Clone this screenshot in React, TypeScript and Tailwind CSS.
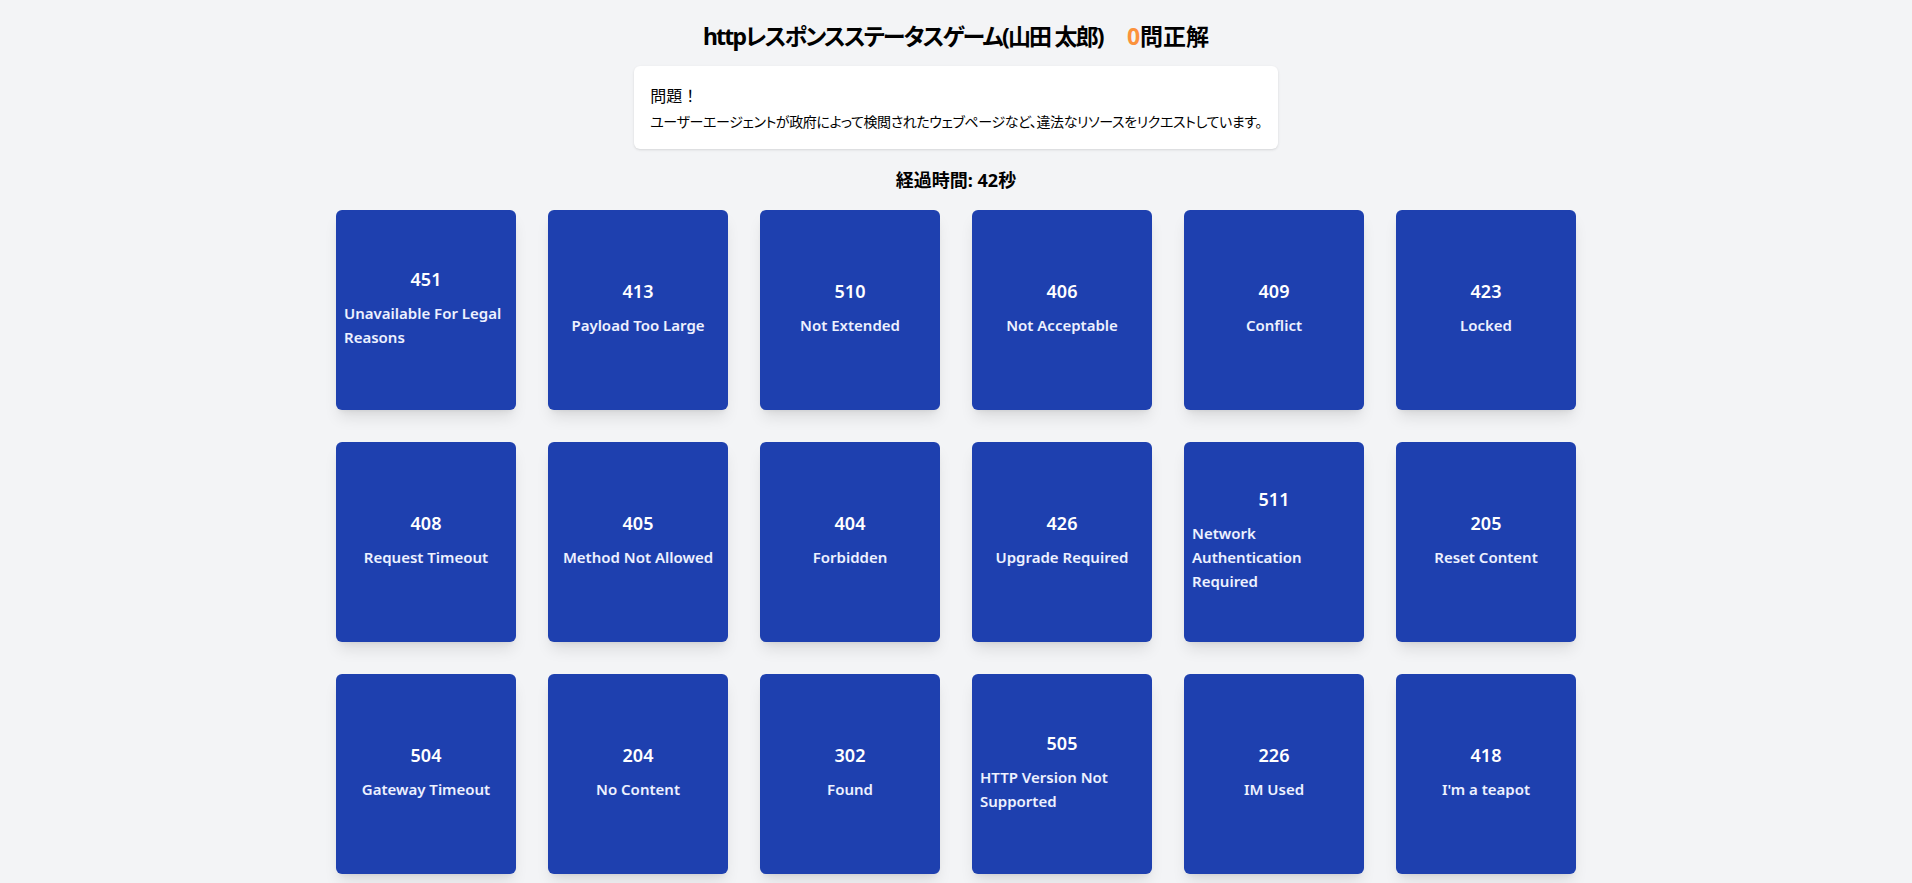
import React from 'react';

type Status = { code: number; label: string };

const statuses: Status[] = [
  { code: 451, label: 'Unavailable For Legal Reasons' },
  { code: 413, label: 'Payload Too Large' },
  { code: 510, label: 'Not Extended' },
  { code: 406, label: 'Not Acceptable' },
  { code: 409, label: 'Conflict' },
  { code: 423, label: 'Locked' },
  { code: 408, label: 'Request Timeout' },
  { code: 405, label: 'Method Not Allowed' },
  { code: 404, label: 'Forbidden' },
  { code: 426, label: 'Upgrade Required' },
  { code: 511, label: 'Network Authentication Required' },
  { code: 205, label: 'Reset Content' },
  { code: 504, label: 'Gateway Timeout' },
  { code: 204, label: 'No Content' },
  { code: 302, label: 'Found' },
  { code: 505, label: 'HTTP Version Not Supported' },
  { code: 226, label: 'IM Used' },
  { code: 418, label: "I'm a teapot" },
];

function StatusCard({ status }: { status: Status }) {
  return (
    <button className="flex h-[200px] w-[180px] flex-col items-center justify-center rounded-md bg-[#1e40af] px-2 pb-[15px] pt-2 text-white shadow-lg">
      <span className="mb-2 text-lg font-semibold leading-7">{status.code}</span>
      <span className="text-left text-[15px] font-semibold leading-6 text-indigo-50">{status.label}</span>
    </button>
  );
}

export default function App() {
  const score = 0;
  const elapsed = 42;

  return (
    <div className="min-h-screen bg-gray-100 font-['Noto_Sans','Noto_Sans_CJK_JP',sans-serif] text-black">
      <div className="flex flex-col items-center pt-5">
        <h1 className="flex items-center text-[23px] font-bold leading-8 [font-feature-settings:'palt']">
          <span className="tracking-[-1.8px]">httpレスポンスステータスゲーム(山田 太郎)</span>
          <span className="ml-6">
            <span className="text-[#fb923c]">{score}</span>問正解
          </span>
        </h1>

        <div className="mt-[14px] w-fit rounded-md bg-white px-4 pb-[17px] pt-[18px] shadow-sm">
          <p className="text-base leading-6">問題！</p>
          <p className="mt-1 text-sm leading-5 [font-feature-settings:'palt'] tracking-[-0.4px]">
            ユーザーエージェントが政府によって検閲されたウェブページなど、違法なリソースをリクエストしています。
          </p>
        </div>

        <p className="mt-[17px] text-lg font-bold leading-7">経過時間: {elapsed}秒</p>

        <div className="mt-4 grid grid-cols-6 gap-8">
          {statuses.map((s) => (
            <StatusCard key={s.code} status={s} />
          ))}
        </div>
      </div>
    </div>
  );
}
